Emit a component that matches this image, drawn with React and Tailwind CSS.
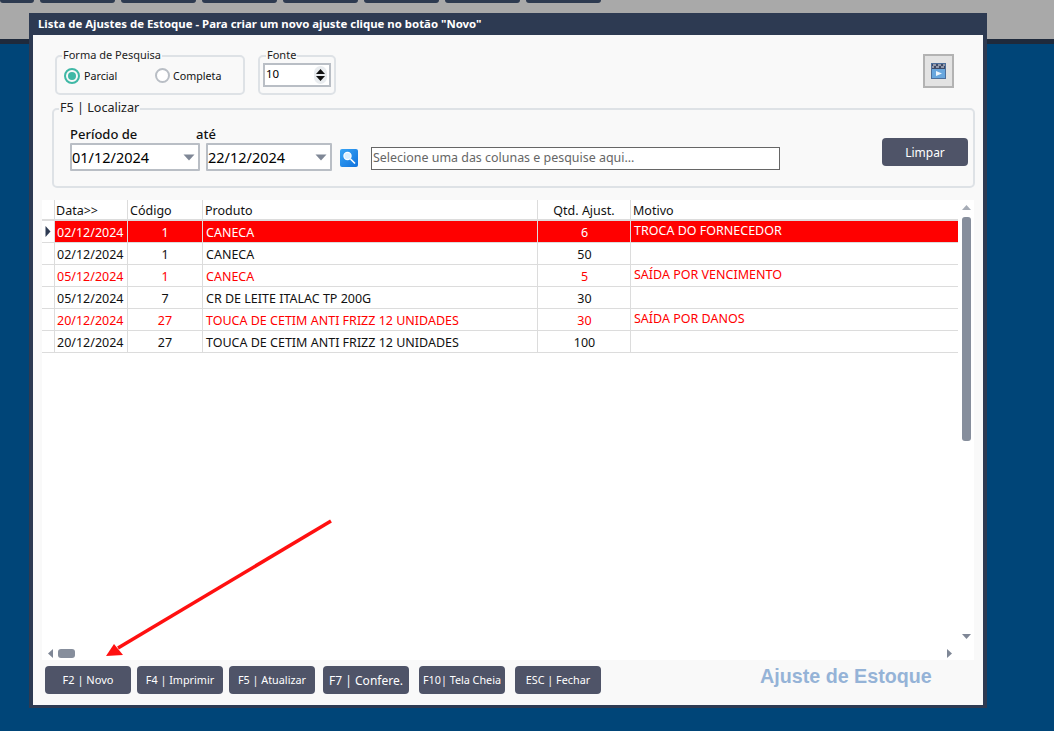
const font = { fontFamily: '"Noto Sans", "Open Sans", sans-serif' };

const rows = [
  { d: "02/12/2024", c: "1", p: "CANECA", q: "6", m: "TROCA DO FORNECEDOR", t: "sel" },
  { d: "02/12/2024", c: "1", p: "CANECA", q: "50", m: "", t: "" },
  { d: "05/12/2024", c: "1", p: "CANECA", q: "5", m: "SAÍDA POR VENCIMENTO", t: "red" },
  { d: "05/12/2024", c: "7", p: "CR DE LEITE ITALAC TP 200G", q: "30", m: "", t: "" },
  { d: "20/12/2024", c: "27", p: "TOUCA DE CETIM ANTI FRIZZ 12 UNIDADES", q: "30", m: "SAÍDA POR DANOS", t: "red" },
  { d: "20/12/2024", c: "27", p: "TOUCA DE CETIM ANTI FRIZZ 12 UNIDADES", q: "100", m: "", t: "" },
];

function Caret({ className }) {
  return (
    <svg width="12" height="7" viewBox="0 0 12 7" className={className}>
      <path d="M0.5 0.5H11.5L6 6.5Z" fill="#7f8796" />
    </svg>
  );
}

function Combo({ value, width }) {
  return (
    <div className={`${width} h-[28px] bg-white border-[2px] border-[#b9bec5] flex items-center justify-between pr-[3px] rounded-[1px]`}>
      <span className="text-[14.5px] text-black leading-none">{value}</span>
      <Caret />
    </div>
  );
}

function Btn({ children, cls = "text-[10.8px]" }) {
  return (
    <button className={`w-[86px] h-[28px] shrink-0 rounded-[4px] bg-[#4f5468] text-white ${cls} flex items-center justify-center`}>
      {children}
    </button>
  );
}

export default function App() {
  return (
    <div style={font} className="relative w-[1054px] h-[731px] overflow-hidden bg-[#004578]">
      <div className="h-[39px] bg-[#a9a9a9] flex gap-[6px] items-start border-b-0">
        <div className="w-[34px] h-[3px] bg-[#2d3a50] rounded-b-[3px]" />
        {[0, 1, 2, 3, 4, 5, 6].map((i) => (
          <div key={i} className="w-[75px] h-[3px] bg-[#2d3a50] rounded-b-[3px]" />
        ))}
      </div>
      <div className="h-[5px] bg-[#1f2a3c]" />

      <div className="absolute left-[29px] top-[13px] w-[958px] h-[695px] bg-[#2d3a52] flex flex-col pl-[4px] pr-[4px] pb-[3px]">
        <div className="h-[22px] shrink-0 flex items-center pl-[5px] text-white text-[11.4px] font-bold whitespace-nowrap">
          Lista de Ajustes de Estoque - Para criar um novo ajuste clique no botão "Novo"
        </div>

        <div className="flex-1 bg-[#f9f9f9] flex flex-col min-h-0">
          <div className="h-[73px] shrink-0 flex items-start pl-[22px] pr-[29px] pt-[19px]">
            <div className="relative w-[190px] h-[40px] border-[2px] border-[#dee2e6] rounded-[5px] mt-[1px] flex items-center pl-[7px] text-[10.7px] text-[#111]">
              <span className="absolute -top-[9px] left-[5px] px-[1px] bg-[#f9f9f9] text-[11px] leading-[14px] text-[#222]">Forma de Pesquisa</span>
              <span className="w-[16px] h-[16px] rounded-full border-[2px] border-[#3fb8a6] flex items-center justify-center mr-[4px] mt-[1px]">
                <span className="w-[8px] h-[8px] rounded-full bg-[#3fb8a6]" />
              </span>
              <span className="w-[71px] mt-[3px]">Parcial</span>
              <span className="w-[15px] h-[15px] rounded-full border-[2px] border-[#b9bec5] bg-white mr-[3px] mt-[1px]" />
              <span className="mt-[3px]">Completa</span>
            </div>
            <div className="relative w-[78px] h-[40px] border-[2px] border-[#dee2e6] rounded-[5px] mt-[1px] ml-[13px] flex items-center justify-center">
              <span className="absolute -top-[9px] left-[6px] px-[1px] bg-[#f9f9f9] text-[11px] leading-[14px] text-[#222]">Fonte</span>
              <div className="w-[68px] h-[24px] bg-white border-[2px] border-[#b9bec5] flex items-center justify-between pl-[1px] pr-[2px]">
                <span className="text-[11.5px] text-black leading-none -mt-[2px]">10</span>
                <span className="w-[13px] h-[18px] rounded-full bg-[#e9ecef] flex flex-col items-center justify-center gap-[2px]">
                  <svg width="9" height="5" viewBox="0 0 9 5"><path d="M0 5L4.5 0L9 5Z" fill="#111" /></svg>
                  <svg width="9" height="5" viewBox="0 0 9 5"><path d="M0 0L9 0L4.5 5Z" fill="#111" /></svg>
                </span>
              </div>
            </div>
            <div className="ml-auto w-[31px] h-[34px] bg-[#e3e3e3] border-[2px] border-[#b3b3b3] flex items-center justify-center">
              <svg width="15" height="16" viewBox="0 0 15 16">
                <rect x="0.5" y="0.5" width="14" height="15" fill="#5b93cf" stroke="#4d6f9c" />
                <rect x="1" y="1" width="13" height="5" fill="#3d4a66" />
                <path d="M2 2H5M7 2H10M12 2H14M1 4H3M5 4H8M10 4H13" stroke="#e6e6ee" strokeWidth="1" />
                <rect x="1" y="6" width="13" height="9" fill="#69a7de" />
                <path d="M5 8L11 10.5L5 13Z" fill="#eef6fd" />
              </svg>
            </div>
          </div>

          <div className="relative h-[80px] shrink-0 ml-[19px] mr-[8px] border-[2px] border-[#dee2e6] rounded-[5px] flex items-start pl-[16px]">
            <span className="absolute -top-[10px] left-[5px] px-[1px] bg-[#f9f9f9] text-[12.6px] leading-[15px] text-[#222]">F5 | Localizar</span>
            <div className="flex flex-col pt-[16px]">
              <div className="flex h-[17px] items-center text-[13px] font-medium text-[#111]">
                <span className="w-[126px]">Período de</span>
                <span>até</span>
              </div>
              <div className="flex gap-[6px]">
                <Combo value="01/12/2024" width="w-[130px]" />
                <Combo value="22/12/2024" width="w-[126px]" />
              </div>
            </div>
            <div className="ml-[8px] mt-[39px] w-[18px] h-[18px] rounded-[2px] bg-linear-to-br from-[#38a5f6] to-[#1272dc] shrink-0 flex items-center justify-center">
              <svg width="16" height="16" viewBox="0 0 16 16">
                <circle cx="6.5" cy="6" r="3.6" fill="#d8eeff" stroke="#ffffff" strokeWidth="1.2" />
                <path d="M9.5 9L14 13.5" stroke="#ffffff" strokeWidth="1.6" />
              </svg>
            </div>
            <div className="ml-[13px] mt-[37px] w-[409px] h-[23px] bg-white border border-[#666] flex items-center pl-[1px] pb-[1px] text-[12.45px] text-[#666] whitespace-nowrap">
              Selecione uma das colunas e pesquise aqui...
            </div>
            <div className="ml-auto mr-[5px] mt-[28px]">
              <Btn cls="text-[12px] pt-[1px]">Limpar</Btn>
            </div>
          </div>

          <div className="mt-[12px] h-[460px] shrink-0 flex flex-col bg-white ml-[9px] mr-[9px]">
            <div className="flex flex-1 min-h-0">
              <div className="flex-1 min-w-0 flex flex-col text-[12.5px]">
                <div className="h-[21px] flex border-b-[2px] border-[#dcdcdc] text-[#111] leading-[21px]">
                  <div className="w-[12px]" />
                  <div className="w-[73px] border-l border-[#dcdcdc] pl-[1px]">Data&gt;&gt;</div>
                  <div className="w-[75px] border-l border-[#dcdcdc] pl-[2px]">Código</div>
                  <div className="w-[335px] border-l border-[#dcdcdc] pl-[2px]">Produto</div>
                  <div className="w-[93px] border-l border-[#dcdcdc] text-center">Qtd. Ajust.</div>
                  <div className="flex-1 border-l border-[#dcdcdc] pl-[2px]">Motivo</div>
                </div>
                {rows.map((r, i) => {
                  const color = r.t === "sel" ? "bg-[#ff0000] text-white" : r.t === "red" ? "text-[#ff0000]" : "text-[#111]";
                  return (
                    <div key={i} className="h-[22px] flex border-b border-[#dcdcdc] leading-[23px]">
                      <div className="w-[12px] flex items-center justify-center">
                        {r.t === "sel" && (
                          <svg width="6" height="11" viewBox="0 0 6 11"><path d="M0.5 0L5.5 5.5L0.5 11Z" fill="#2d3a52" /></svg>
                        )}
                      </div>
                      <div className={`flex-1 flex min-w-0 ${color}`}>
                        <div className="w-[73px] border-l border-[#dcdcdc] pl-[2px]">{r.d}</div>
                        <div className="w-[75px] border-l border-[#dcdcdc] text-center">{r.c}</div>
                        <div className="w-[335px] border-l border-[#dcdcdc] pl-[3px]">{r.p}</div>
                        <div className="w-[93px] border-l border-[#dcdcdc] text-center pl-[1px]">{r.q}</div>
                        <div className="flex-1 border-l border-[#dcdcdc] pl-[3px] leading-[19px]">{r.m}</div>
                      </div>
                    </div>
                  );
                })}
              </div>
              <div className="w-[16px] shrink-0 flex flex-col items-center">
                <svg className="mt-[5px]" width="9" height="5" viewBox="0 0 9 5"><path d="M0 5L4.5 0L9 5Z" fill="#a6acb6" /></svg>
                <div className="w-[9px] h-[224px] mt-[7px] rounded-[3px] bg-[#868e9c]" />
                <svg className="mt-auto mb-[5px]" width="9" height="5" viewBox="0 0 9 5"><path d="M0 0L9 0L4.5 5Z" fill="#7f8796" /></svg>
              </div>
            </div>
            <div className="h-[16px] shrink-0 flex items-center pl-[6px] pr-[22px] pt-[2px]">
              <svg width="5" height="9" viewBox="0 0 5 9"><path d="M5 0V9L0 4.5Z" fill="#7f8796" /></svg>
              <div className="w-[17px] h-[9px] ml-[5px] rounded-[3px] bg-[#868e9c]" />
              <svg className="ml-auto" width="5" height="9" viewBox="0 0 5 9"><path d="M0 0V9L5 4.5Z" fill="#7f8796" /></svg>
            </div>
          </div>

          <div className="flex-1 flex items-start pl-[12px] pt-[6px]">
            <Btn cls="text-[11px]">F2 | Novo</Btn>
            <div className="ml-[6px]"><Btn>F4 | Imprimir</Btn></div>
            <div className="ml-[6px]"><Btn>F5 | Atualizar</Btn></div>
            <div className="ml-[8px]"><Btn cls="text-[12px] pt-[2px]">F7 | Confere.</Btn></div>
            <div className="ml-[10px]"><Btn>F10| Tela Cheia</Btn></div>
            <div className="ml-[10px]"><Btn>ESC | Fechar</Btn></div>
            <span
              style={{ fontFamily: '"Liberation Sans", Arial, sans-serif' }}
              className="ml-[159px] mt-[-2px] text-[19.7px] leading-[24px] font-bold text-[#95b3d7] whitespace-nowrap"
            >
              Ajuste de Estoque
            </span>
          </div>
        </div>
      </div>

      <svg className="absolute left-0 top-0 pointer-events-none" width="1054" height="731" viewBox="0 0 1054 731">
        <path d="M331 521L118 648" stroke="#ff1010" strokeWidth="3.5" fill="none" />
        <path d="M106 656L114 644L123 655Z" fill="#ff1010" />
      </svg>
    </div>
  );
}
